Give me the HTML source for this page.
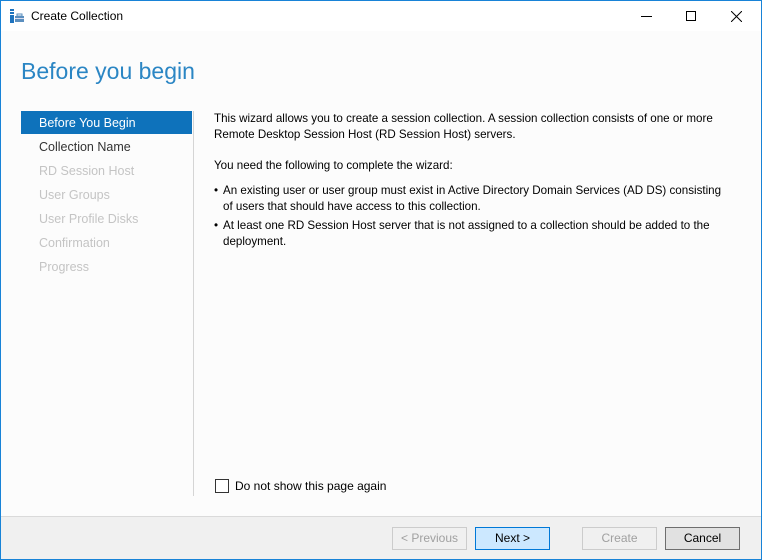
<!DOCTYPE html>
<html><head><style>
*{margin:0;padding:0;box-sizing:border-box}
body{width:762px;height:560px;overflow:hidden;font-family:"Liberation Sans",sans-serif;font-size:12px;color:#000;background:#fcfcfc;position:relative}
.abs{position:absolute;white-space:nowrap}
#win{position:absolute;left:0;top:0;width:762px;height:560px;border:1px solid #1883d7;border-top:none}
#title{position:absolute;left:0;top:0;width:762px;height:31px;background:#fff;border-top:1px solid #1883d7}
.nav{position:absolute;left:39px;font-size:12.5px;color:#c4c4c4}
p.t{position:absolute;left:214px;white-space:nowrap;font-size:11.6px;line-height:16px}
.btn{position:absolute;top:527px;height:23px;width:75px;border:1px solid #adadad;background:#e1e1e1;text-align:center;line-height:21px;font-size:12px}
</style></head><body>
<div id="title">
 <svg class="abs" style="left:9px;top:7px" width="16" height="16" viewBox="0 0 16 16">
  <rect x="1" y="1" width="4" height="2" fill="#1e73be"/><rect x="1" y="4" width="4" height="2" fill="#1e73be"/><rect x="1" y="7" width="4" height="8" fill="#1e73be"/>
  <rect x="6" y="8" width="9" height="6" fill="#5b8fbf"/><rect x="8" y="6" width="5" height="2" fill="none" stroke="#5b8fbf"/><rect x="6" y="10" width="9" height="1" fill="#dde"/>
 </svg>
 <div class="abs" style="left:31px;top:8px;font-size:12px">Create Collection</div>
 <div class="abs" style="left:641px;top:15px;width:11px;height:1px;background:#000"></div>
 <div class="abs" style="left:686px;top:10px;width:10px;height:10px;border:1px solid #000"></div>
 <svg class="abs" style="left:731px;top:10px" width="11" height="11"><path d="M0 0L11 11M11 0L0 11" stroke="#000" stroke-width="1"/></svg>
</div>
<div class="abs" style="left:21px;top:58px;font-size:23px;color:#2b86c4;font-weight:300">Before you begin</div>
<div class="abs" style="left:21px;top:111px;width:171px;height:23px;background:#0e72bb"></div>
<div class="nav" style="top:116px;color:#fff">Before You Begin</div>
<div class="nav" style="top:140px;color:#333">Collection Name</div>
<div class="nav" style="top:164px">RD Session Host</div>
<div class="nav" style="top:188px">User Groups</div>
<div class="nav" style="top:212px">User Profile Disks</div>
<div class="nav" style="top:236px">Confirmation</div>
<div class="nav" style="top:260px">Progress</div>
<div class="abs" style="left:193px;top:111px;width:1px;height:385px;background:#d5d5d5"></div>
<p class="t" style="top:111px">This wizard allows you to create a session collection. A session collection consists of one or more<br>Remote Desktop Session Host (RD Session Host) servers.</p>
<p class="t" style="top:158px">You need the following to complete the wizard:</p>
<p class="t" style="top:183px;left:214px">•</p>
<p class="t" style="top:183px;left:223px">An existing user or user group must exist in Active Directory Domain Services (AD DS) consisting<br>of users that should have access to this collection.</p>
<p class="t" style="top:218px;left:214px">•</p>
<p class="t" style="top:218px;left:223px">At least one RD Session Host server that is not assigned to a collection should be added to the<br>deployment.</p>
<div class="abs" style="left:215px;top:479px;width:14px;height:14px;border:1px solid #333;background:#fff"></div>
<div class="abs" style="left:235px;top:479px;font-size:12px">Do not show this page again</div>
<div class="abs" style="left:1px;top:516px;width:760px;height:43px;background:#f0f0f0;border-top:1px solid #dadada"></div>
<div class="btn" style="left:392px;color:#a0a0a0;background:#f0f0f0;border-color:#ccc">&lt; Previous</div>
<div class="btn" style="left:475px;background:#cce8ff;border-color:#0078d7">Next &gt;</div>
<div class="btn" style="left:582px;color:#a0a0a0;background:#f0f0f0;border-color:#ccc">Create</div>
<div class="btn" style="left:665px;border-color:#6e6e6e">Cancel</div>
<div id="win"></div>
</body></html>
